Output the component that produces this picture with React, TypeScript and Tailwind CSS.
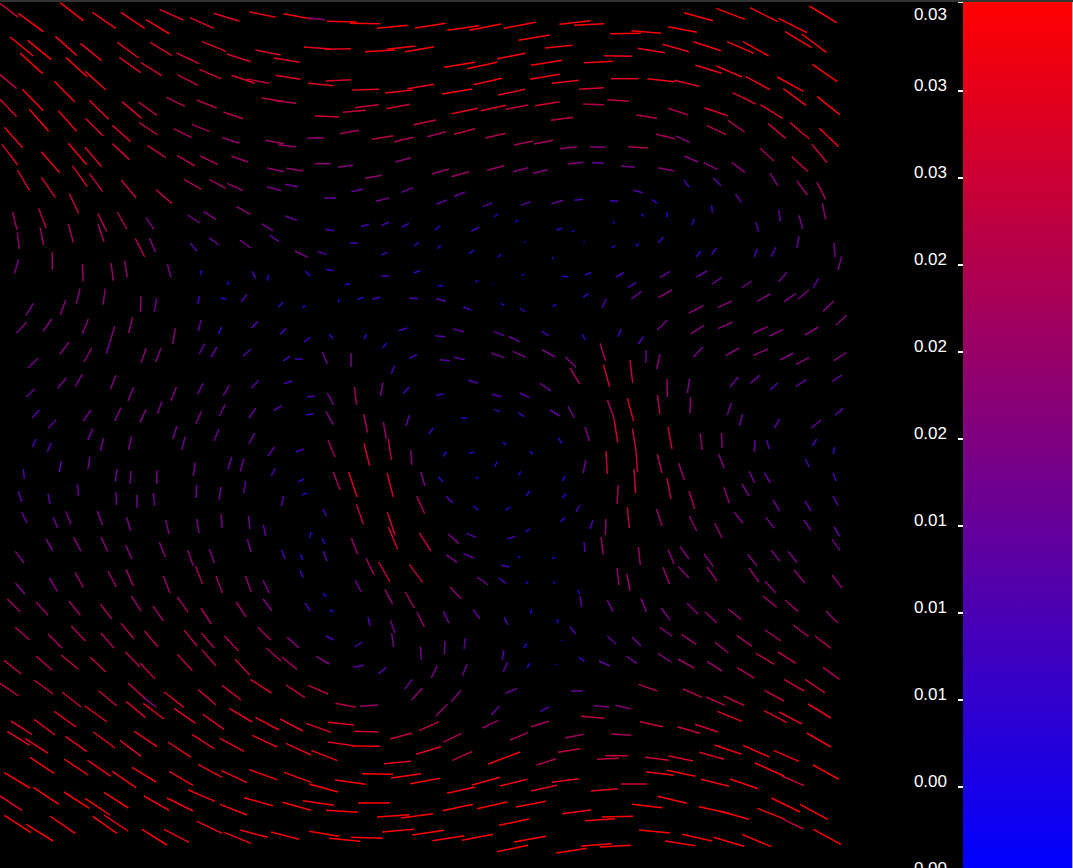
import React from 'react';

// Segments are read off in 3x crop coordinates, grouped by crop: [offsetX, offsetY, x1,y1,x2,y2 ...]
const crops: [number, number, string][] = [
  [0, 0, `0,10,55,52 55,40,130,95 180,8,250,62 277,37,347,85 363,37,434,85 478,28,550,60 570,53,641,85 641,40,718,64 747,35,827,52 850,41,935,57 925,54,975,59 981,64,1070,66 1050,70,1140,71 1131,85,1223,76 1245,84,1337,70
438,59,509,102 30,111,100,168 83,121,154,179 166,109,230,166 241,130,305,182 352,127,416,174 450,127,515,166 606,125,678,154 530,159,597,191 680,162,752,185 766,150,842,165 821,174,899,187 912,141,992,147 972,148,1053,146 1095,155,1185,150 1160,148,1247,138 1215,155,1302,140
60,159,128,221 198,173,262,231 358,172,422,218 423,188,485,227 598,208,663,236 694,226,765,250 740,237,808,250 826,226,902,238 977,243,1053,239 256,214,318,270 0,224,50,266 532,224,594,256 924,250,1001,257 1056,270,1137,268 1155,279,1238,270 1222,266,1302,253
67,268,130,332 163,244,224,305 0,298,50,350 268,301,326,358 366,305,425,355 415,306,471,346 499,292,555,319 590,300,650,324 670,336,729,356 784,294,848,304 825,302,888,310 945,347,1017,351 1029,337,1098,331 1065,323,1136,314 1158,326,1229,313
88,328,146,394 175,332,230,394 256,355,310,408 337,376,392,425 418,368,473,405 521,386,575,413 576,373,629,395 667,413,718,430 796,421,852,431 835,434,888,441 921,415,972,413 1020,401,1077,391 1116,418,1180,407 1182,425,1241,412 1240,374,1308,360 1282,410,1338,395
13,382,68,443 6,433,53,495 205,430,260,494 255,442,305,500 337,431,388,479 442,436,497,473 124,455,179,518 531,466,585,498 601,468,654,494 694,469,744,486 802,504,852,515 859,505,910,513 944,491,993,491 1014,502,1059,495 1186,486,1233,473
53,511,89,572 124,532,166,593 217,497,262,560 268,520,308,575 364,541,408,593 468,569,516,611 552,538,604,568 628,539,678,565 682,550,729,572 801,560,843,572 855,553,894,560 972,594,1008,594 1054,575,1089,567 1095,535,1146,526 1128,604,1167,594 1204,577,1239,563
208,581,236,641 38,636,51,690 116,625,138,684 294,640,320,695 352,636,381,688 438,652,462,689 563,645,599,669 610,634,648,658 709,619,751,643 856,648,891,661 784,671,819,692 976,688,1002,692 1083,680,1107,672 1144,677,1167,666 1206,681,1227,670
52,697,58,747 120,682,131,735 205,672,220,728 294,672,312,725 448,714,466,755 406,716,434,771 571,730,590,753 627,713,657,735 719,720,753,744 808,705,837,725 885,753,923,772 952,754,980,764 1050,730,1073,729 1242,738,1257,727 1144,765,1162,757
56,778,43,821 157,756,157,809 247,792,250,845 333,789,340,842 374,782,382,832 502,792,513,833 604,810,601,827 757,814,767,836 806,824,802,842 916,813,929,827 978,808,999,812 1144,828,1167,828 1242,818,1261,812 684,843,684,855 1034,854,1050,851 240,866,229,911 316,866,309,914`],
  [430, 0, `52,91,147,77 118,91,213,72 222,85,317,67 388,73,482,62 432,76,522,71 265,121,359,105 540,101,633,100 604,92,693,100 714,80,801,97 762,38,849,62 859,25,945,58 960,23,1043,65 1045,55,1131,98 1138,18,1220,68 1065,95,1145,143 1115,102,1190,158
697,133,777,155 790,125,873,152 891,125,972,160 939,125,1016,168 623,145,705,158 345,144,428,136 42,202,135,187 111,206,201,187 201,176,287,160 303,196,396,181 522,167,606,169 462,188,549,184 1147,193,1222,245 796,196,875,220 859,198,936,231 946,229,1020,269 1042,231,1120,274 1060,266,1128,316 300,238,389,223 130,254,216,235 543,236,625,236 652,236,735,245 733,241,807,259 366,250,447,241 447,268,522,263 36,282,126,267 204,285,285,268 908,278,977,312 991,314,1058,355 1161,289,1229,344 532,299,597,304 65,341,144,325 152,332,228,316 226,328,294,315 315,317,389,305 459,312,522,314 823,323,893,347 714,325,773,344 618,345,681,355 363,361,429,352 831,377,888,404 894,361,944,396 1014,371,1067,415 1080,368,1138,417 1168,385,1226,440 72,403,135,386 166,414,227,400 678,403,735,416 737,408,780,427 252,435,309,423 312,432,370,421 390,446,441,440 480,441,528,442 594,440,654,444 1146,433,1191,488 991,445,1031,483 1085,470,1133,514 763,468,804,486 821,488,863,509 906,488,945,517 414,492,460,487 486,488,522,490 573,498,615,502 684,503,732,513 7,521,57,507 64,530,117,515 171,511,222,497 249,515,294,503 309,520,354,509 1020,519,1043,557 1100,542,1132,585 1161,547,1187,598 762,541,777,561 850,534,873,557 916,582,935,608 72,590,105,576 18,613,51,600 159,620,186,608 273,616,303,605 364,611,400,601 433,601,459,598 540,602,564,604 610,571,639,578 666,598,681,610 1177,610,1187,658 1107,646,1118,687 1046,630,1051,665 845,615,847,638 711,636,711,652 634,640,641,650 786,676,792,657 978,667,986,695 192,651,204,642 258,668,261,660 16,689,30,678 124,694,147,681 379,690,396,685 426,694,432,694 549,664,553,670 22,746,32,736 117,761,132,751 282,728,285,724 460,728,464,726 545,744,555,736 618,740,625,730 684,728,700,712 1101,744,1107,708 798,771,812,754 844,765,859,744 973,771,982,747 1024,770,1037,742 1212,729,1215,771 1224,810,1235,769 204,772,212,763 366,778,370,771 396,829,414,830 465,825,484,817 559,831,582,817 690,833,720,814 799,831,831,813 846,852,876,832 934,864,965,843 1045,846,1071,817 1150,863,1166,834 274,827,282,823 138,848,141,840 189,854,191,852 24,859,39,857 594,863,618,848`],
  [0, 290, `100,40,78,76 197,30,181,75 423,17,421,66 470,25,463,65 599,18,593,41 662,23,678,28 741,13,723,35 849,36,835,51 916,46,907,53 1017,28,1015,38 1072,28,1090,22 1117,28,1141,22 1228,24,1254,26 80,96,50,129 155,87,129,125 265,87,247,131 344,109,330,155 398,81,386,129 526,115,518,162 603,90,595,123 665,111,655,132 774,94,754,114 858,115,840,134 930,141,913,156 987,132,999,147 1099,132,1093,148 1196,122,1221,114 1160,159,1149,173 330,155,319,192 207,156,179,194 275,174,252,216 439,174,423,219 483,174,467,216 614,161,598,192 651,171,633,201 753,177,730,198 870,199,849,213 885,207,908,208 967,186,982,222 1053,189,1053,231 1251,193,1228,205 114,205,84,234 1184,226,1174,251 199,264,173,295 247,252,226,290 348,256,331,298 1149,277,1141,318 104,297,78,321 401,292,384,333 529,291,513,332 609,280,592,313 688,285,670,317 777,270,754,294 876,273,852,281 921,320,945,319 982,309,1001,345 1063,291,1070,345 1227,292,1209,311 118,360,96,384 273,360,250,393 363,353,344,393 438,358,420,398 486,334,472,372 604,364,587,402 676,343,658,378 768,354,747,384 845,347,820,362 918,374,941,372 978,365,1000,404 1091,372,1103,428 1150,396,1159,447 1228,376,1218,408 168,390,145,414 278,416,263,451 395,439,385,480 311,444,301,483 531,408,518,447 555,441,545,480 657,417,642,453 764,429,747,462 1287,432,1299,414 108,447,97,471 153,459,142,486 823,471,804,498 912,477,888,485 984,450,1005,501 1092,460,1109,528 1165,447,1174,510 1232,480,1236,525 184,513,178,546 270,500,264,537 695,501,684,537 731,507,721,544 826,534,814,558 586,516,580,558 70,537,73,567 351,537,346,576 393,543,390,582 471,540,470,582 1000,546,1020,600 1046,547,1071,621 1161,549,1180,621 1262,546,1275,588 55,604,65,636 144,612,150,642 232,583,236,618 347,606,350,645 411,615,411,654 460,609,464,648 590,585,588,624 663,591,657,630 737,573,731,609 912,567,895,576 921,609,906,615 851,618,844,648 1069,642,1090,703 1162,666,1185,735 1250,619,1274,671 65,666,81,699 160,682,173,715 197,664,213,702 292,663,307,705 380,682,392,723 497,690,507,732 590,687,597,729 663,672,667,714 745,678,750,717 790,705,797,738 968,657,980,678 933,726,930,744 966,744,974,762 1165,711,1193,778 1258,729,1293,783 138,747,159,783 221,742,243,784 303,741,323,784 377,765,396,807 478,757,496,802 563,781,580,828 628,777,643,820 742,747,753,786 845,780,855,807 901,792,908,810 970,783,981,813 1054,744,1073,793 46,784,72,819 1098,804,1122,855 1136,816,1170,876 1228,823,1268,877 586,828,608,882 225,847,250,892 324,843,349,891 378,838,400,888 490,858,510,909 648,858,667,909 736,858,754,906 900,841,910,862 148,864,172,904`],
  [430, 290, `18,26,48,34 100,51,123,60 213,40,222,46 270,54,285,66 369,50,378,42 460,22,475,10 516,53,529,27 604,27,634,4 684,23,726,0 777,69,820,47 864,52,906,33 981,34,1021,12 1062,35,1098,10 1104,27,1137,0 1179,64,1212,33 1218,105,1251,75 70,117,102,125 192,124,222,137 236,139,268,155 336,124,357,138 15,137,46,140 456,132,466,150 564,140,573,117 625,162,640,139 682,120,712,90 783,131,822,106 864,116,908,96 970,129,1014,110 1018,138,1060,118 1125,135,1165,111 184,189,222,203 248,184,288,202 336,179,375,201 72,202,104,209 30,209,60,212 406,201,438,232 510,160,527,213 648,180,648,219 690,192,680,237 790,201,819,171 887,197,927,174 970,196,1014,177 1050,210,1090,189 1097,224,1138,202 1212,212,1249,187 420,234,449,282 520,223,539,291 600,210,608,279 711,267,712,321 779,267,772,309 900,291,925,261 961,280,989,256 1020,300,1043,279 1098,289,1128,270 1206,275,1236,255 115,271,144,279 330,280,363,303 186,312,213,320 270,309,298,323 18,316,40,312 532,330,552,385 592,324,611,394 682,315,690,373 782,321,780,370 904,338,892,375 414,348,433,384 192,358,210,365 265,368,282,380 360,360,389,378 93,384,111,384 552,385,563,457 938,372,928,408 1049,387,1033,414 1239,355,1215,376 1173,390,1145,413 465,411,478,453 607,415,618,480 714,411,726,477 810,430,817,480 874,429,877,474 975,450,973,486 1010,450,1018,477 1160,447,1147,468 385,444,396,460 219,456,228,465 618,480,623,547 528,483,532,552 40,500,48,485 117,489,132,487 300,483,309,492 1214,471,1209,492 193,531,202,515 467,510,460,549 682,492,696,549 746,520,763,570 866,492,882,534 958,544,974,579 1126,507,1138,531 1003,549,1021,579 265,555,273,544 612,537,617,609 711,564,723,627 1209,549,1218,573 405,558,397,573 25,561,39,576 138,562,144,567 936,582,957,618 882,592,898,640 777,603,794,657 565,585,561,642 300,603,288,618 408,610,397,624 48,619,69,639 1209,618,1224,646 130,648,144,660 240,651,228,660 1029,630,1049,663 1125,633,1143,663 449,645,438,666 592,651,598,714 680,657,696,708 778,678,800,723 854,699,876,744 912,666,939,700 1008,682,1032,715 1122,690,1143,722 405,682,391,696 1212,709,1229,739 489,690,480,717 528,687,526,735 300,717,286,725 54,732,87,761 111,730,139,743 232,747,256,739 462,756,465,786 513,741,520,793 1206,748,1230,782 750,769,777,807 714,778,732,822 625,771,631,825 822,792,850,830 953,793,981,828 1023,781,1050,814 1074,784,1102,818 48,794,81,817 100,791,131,804 265,798,270,803 366,807,375,801 213,826,238,831 744,829,777,864 831,831,861,873 957,834,987,876 1092,840,1125,879 1206,855,1236,894 699,832,718,882 561,834,567,885 591,852,600,903 141,861,174,885 207,864,228,880`],
  [0, 578, `46,15,75,49 789,7,808,45 1066,6,1083,42 22,62,60,101 108,72,144,112 207,69,241,112 301,78,335,123 394,54,423,99 459,84,490,129 532,57,564,103 603,90,634,138 709,72,738,117 789,63,816,99 970,45,978,57 990,96,1000,102 915,75,931,100 1155,34,1178,79 1216,42,1243,90 1251,102,1273,147 1104,117,1110,144 1171,126,1185,165 45,147,89,186 144,168,186,210 214,144,256,189 303,165,342,211 363,136,402,183 433,159,474,207 552,156,591,204 604,165,643,211 673,174,716,219 774,148,813,187 862,178,897,210 978,174,1002,186 1065,207,1086,192 1175,165,1181,207 1261,205,1264,246 12,247,64,288 109,235,156,276 184,231,234,273 270,237,318,282 376,222,420,267 420,255,465,303 532,229,577,278 606,216,648,264 705,244,750,292 799,210,843,249 846,237,891,274 948,235,988,258 1060,268,1092,262 1135,288,1159,268 1236,304,1214,334 1267,330,1234,367 0,316,56,354 102,306,159,348 186,342,243,387 296,339,351,384 384,315,435,361 430,358,468,387 492,342,552,388 594,334,648,381 666,322,723,366 751,304,814,345 858,321,915,359 924,322,984,348 1006,376,1068,388 1080,385,1134,381 163,400,228,447 255,384,321,432 378,370,436,418 430,376,492,423 522,391,587,436 609,409,672,454 688,391,756,432 766,418,837,456 840,423,909,459 918,436,994,463 983,433,1062,441 32,429,96,469 102,424,165,471 22,460,89,502 75,481,144,526 196,475,261,521 280,462,345,510 403,460,471,506 504,492,573,538 576,469,642,512 660,481,732,520 756,472,831,507 858,496,933,531 934,517,1012,548 984,492,1062,503 1062,460,1135,462 1056,504,1140,505 1170,483,1236,465 1257,458,1317,431 360,487,423,535 90,538,162,586 192,543,264,591 262,546,333,595 337,580,408,629 396,568,468,612 507,580,579,622 594,559,666,598 664,578,741,614 747,575,831,605 852,583,934,613 927,618,1014,642 1005,606,1097,619 1086,587,1179,589 1152,557,1233,550 1173,600,1263,587 1248,529,1323,506 1230,617,1320,601 13,584,90,630 100,628,177,679 192,642,268,691 255,661,330,711 312,643,385,690 432,654,507,697 501,660,579,699 565,636,645,670 660,679,741,711 732,659,819,683 847,673,933,697 909,668,1002,682 978,697,1074,703 1074,675,1170,675 1131,717,1228,710 1203,720,1299,707 0,654,66,697 13,712,93,764 79,739,159,789 150,714,226,767 278,715,351,766 312,711,384,759 426,754,501,801 492,754,567,793 591,730,667,766 673,763,753,796 720,756,804,778 813,762,897,784 927,760,1017,775 987,781,1080,790 1053,778,1149,781 1146,762,1242,754 1236,771,1332,757`],
  [430, 578, `288,10,294,18 369,13,375,15 1005,10,1038,45 60,27,94,63 444,36,448,48 450,54,455,87 532,66,549,100 633,61,649,102 999,54,1040,88 1065,66,1104,100 771,75,805,109 825,102,861,135 894,93,934,125 1188,99,1224,135 40,100,57,135 129,94,150,123 694,90,720,126 222,117,234,141 306,93,301,108 385,124,381,136 420,147,438,169 688,147,726,174 754,169,798,199 855,193,895,225 1005,156,1053,189 1089,141,1135,175 1155,174,1203,211 920,172,966,205 45,189,43,228 106,180,102,213 222,216,216,246 291,196,282,210 396,186,396,189 532,174,558,198 606,177,633,204 684,226,723,252 744,243,792,270 831,250,876,279 921,269,972,300 978,226,1033,259 1044,222,1098,256 1179,268,1228,304 232,252,220,282 300,255,291,270 378,258,378,261 447,238,463,250 507,249,540,264 588,234,621,256 22,262,4,300 111,258,97,294 93,337,63,372 52,378,18,414 226,346,262,331 423,339,459,339 625,319,682,339 759,333,816,358 828,357,885,382 882,354,943,383 1062,304,1122,339 1125,304,1185,345 1003,337,1062,369 1134,378,1203,420 1002,398,1071,434 1047,402,1116,438 862,400,936,430 208,384,184,411 331,400,357,387 492,383,538,387 556,382,603,393 157,450,205,427 303,446,357,430 453,415,522,421 630,431,699,446 742,446,810,466 795,439,864,462 1130,465,1203,507 39,493,94,466 240,486,294,464 405,480,460,469 544,468,604,472 853,501,933,528 939,502,1018,537 1030,517,1107,550 67,547,127,520 175,558,270,522 320,561,378,542 384,523,450,512 501,544,567,541 525,533,594,533 645,538,717,547 714,533,789,549 808,523,882,544 975,555,1062,594 1056,594,1122,623 1149,561,1227,604 51,646,135,627 126,621,210,598 210,624,292,604 303,639,381,622 366,613,447,602 483,639,564,632 573,618,651,618 648,581,731,592 711,577,796,595 813,604,897,625 900,603,984,632 37,698,129,679 141,692,231,672 258,687,348,670 396,707,483,696 465,728,555,722 516,717,609,715 606,679,697,689 682,655,771,676 807,686,897,706 870,700,957,724 982,691,1065,724 1024,660,1110,702 1110,679,1193,724 1060,724,1120,753 7,788,103,773 96,787,189,769 207,742,297,723 252,792,348,775 201,821,294,802 378,825,471,811 453,804,546,797 510,807,603,802 627,756,720,765 705,789,796,803 756,769,846,789 850,778,942,805 936,769,1024,806 1150,754,1234,800`],
];

// colour follows the segment length, same ramp as the colour bar
const stroke = (len: number) => {
  const t = Math.min(1, len / 90);
  return `rgb(${Math.round(255 * t)},0,${Math.round(255 * (1 - t))})`;
};

function Field() {
  const lines = crops.flatMap(([ox, oy, data]) =>
    data.split(/\s+/).map((s) => {
      const [a, b, c, d] = s.split(',').map(Number);
      return { x1: ox + a / 3, y1: oy + b / 3, x2: ox + c / 3, y2: oy + d / 3, color: stroke(Math.hypot(c - a, d - b)) };
    }),
  );
  return (
    <svg className="block h-[866px] w-[860px] shrink-0" viewBox="0 2 860 866">
      {lines.map((l, i) => (
        <line key={i} x1={l.x1} y1={l.y1} x2={l.x2} y2={l.y2} stroke={l.color} strokeWidth={1.5} />
      ))}
    </svg>
  );
}

const labels = ['0.03', '0.03', '0.02', '0.02', '0.02', '0.01', '0.01', '0.01', '0.00', '0.00'];

function Scale() {
  return (
    <div className="flex w-[103px] shrink-0 flex-col font-['Liberation_Sans',sans-serif] text-[17px] leading-[17px] text-white">
      {/* top label sits below its tick */}
      <div className="flex h-[20px] shrink-0 justify-end">
        <span className="mt-[4px]">0.03</span>
        <span className="ml-[11px] h-px w-[5px] bg-white" />
      </div>
      {labels.map((label, i) => (
        <div key={i} className={`flex shrink-0 items-end justify-end ${i === 0 ? 'h-[70px]' : 'h-[87px]'}`}>
          <span className="-mb-[2px]">{label}</span>
          <span className="ml-[11px] h-[2px] w-[5px] bg-white" />
        </div>
      ))}
    </div>
  );
}

export default function App() {
  return (
    <div className="flex h-[868px] w-[1073px] flex-col overflow-hidden bg-black">
      <div className="h-[2px] shrink-0 bg-[#333333]" />
      <div className="flex min-h-0 flex-1">
        <Field />
        <Scale />
        <div className="flex-1 border-r border-[#aaaaaa] bg-[linear-gradient(to_bottom,#ff0000,#0000ff)]" />
      </div>
    </div>
  );
}
